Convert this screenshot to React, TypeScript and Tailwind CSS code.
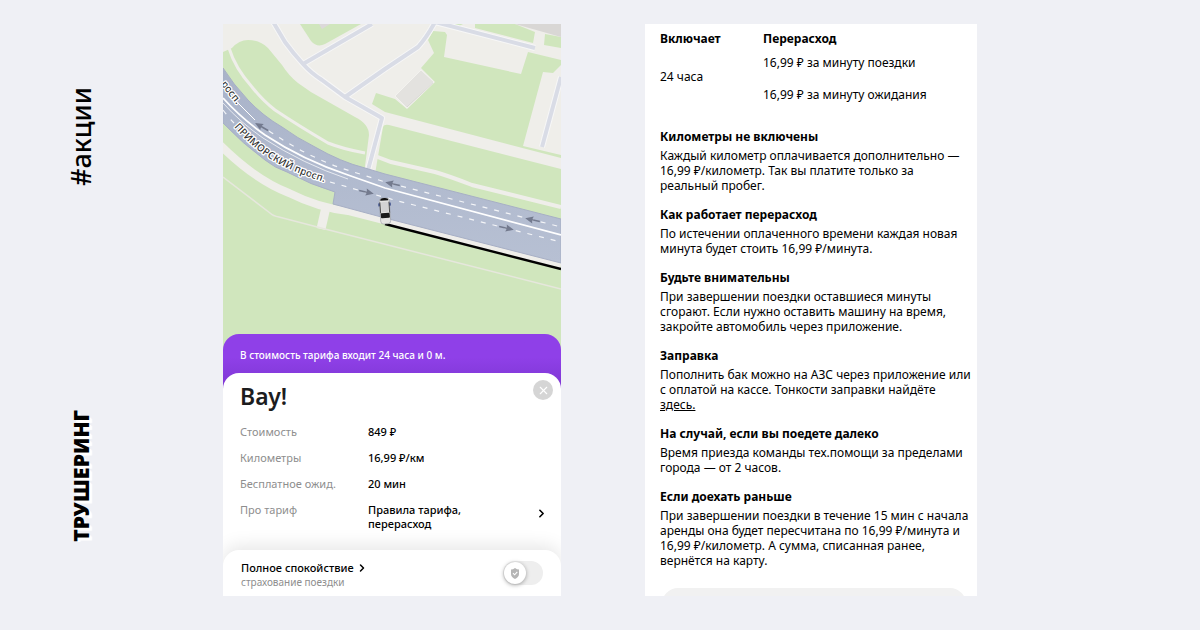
import { useState } from "react";
import { ChevronRight, X } from "lucide-react";

const tariffRows = [
  { label: "Стоимость", value: "849 ₽" },
  { label: "Километры", value: "16,99 ₽/км" },
  { label: "Бесплатное ожид.", value: "20 мин" },
];

const rules = [
  {
    title: "Километры не включены",
    text: "Каждый километр оплачивается дополнительно —\n16,99 ₽/километр. Так вы платите только за\nреальный пробег.",
  },
  {
    title: "Как работает перерасход",
    text: "По истечении оплаченного времени каждая новая\nминута будет стоить 16,99 ₽/минута.",
  },
  {
    title: "Будьте внимательны",
    text: "При завершении поездки оставшиеся минуты\nсгорают. Если нужно оставить машину на время,\nзакройте автомобиль через приложение.",
  },
  {
    title: "Заправка",
    text: "Пополнить бак можно на АЗС через приложение или\nс оплатой на кассе. Тонкости заправки найдёте\n",
    link: "здесь.",
  },
  {
    title: "На случай, если вы поедете далеко",
    text: "Время приезда команды тех.помощи за пределами\nгорода — от 2 часов.",
  },
  {
    title: "Если доехать раньше",
    text: "При завершении поездки в течение 15 мин с начала\nаренды она будет пересчитана по 16,99 ₽/минута и\n16,99 ₽/километр. А сумма, списанная ранее,\nвернётся на карту.",
  },
];

export default function App() {
  return (
    <main className="grid min-h-screen grid-cols-[223fr_338fr_84fr_332fr_223fr] bg-[#eff0f5] pt-6 pb-[34px] font-['Noto_Sans',sans-serif] text-black">
      <Sidebar />
      <TariffScreen />
      <RulesScreen />
    </main>
  );
}

function Sidebar() {
  return (
    <header className="flex flex-col items-start justify-between pt-[63px] pb-[54px] pl-[63px]">
      <p className="rotate-180 text-[27px] leading-9 font-medium [writing-mode:vertical-rl]">
        #акции
      </p>
      <h1 className="rotate-180 text-[21px] leading-9 font-black [text-shadow:-2px_2px_0_#fff,-3px_3px_1px_#fff] [writing-mode:vertical-rl]">
        ТРУШЕРИНГ
      </h1>
    </header>
  );
}

function TariffScreen() {
  return (
    <section className="flex flex-col overflow-hidden bg-white">
      <CityMap />
      <p className="relative -mt-4 rounded-t-2xl bg-gradient-to-b from-[#8f40e8] from-40% to-[#7c35d0] px-[17px] pt-3 pb-7 text-[10px] leading-[18px] font-medium text-white">
        В стоимость тарифа входит 24 часа и 0 м.
      </p>
      <div className="relative -mt-[19px] grow rounded-t-2xl bg-white px-[17px] pt-[7px] text-[11px] leading-[14px]">
        <div className="flex items-start justify-between">
          <h2 className="text-[23px] leading-8 font-semibold text-[#1c1c1e]">
            Вау!
          </h2>
          <button
            aria-label="Закрыть"
            className="-mr-[9px] flex size-5 items-center justify-center rounded-full bg-[#d5d5d5] text-white"
          >
            <X size={13} strokeWidth={2} />
          </button>
        </div>
        <dl className="mt-[13px] flex flex-col gap-3">
          {tariffRows.map(row => (
            <div key={row.label} className="flex">
              <dt className="w-32 text-[#8e8e8e]">{row.label}</dt>
              <dd className="font-medium">{row.value}</dd>
            </div>
          ))}
          <div className="flex">
            <dt className="w-32 text-[#8e8e8e]">Про тариф</dt>
            <dd className="flex grow items-start justify-between font-medium">
              <span>
                Правила тарифа,
                <br />
                перерасход
              </span>
              <ChevronRight size={13} strokeWidth={3} className="-mr-1 mt-1" />
            </dd>
          </div>
        </dl>
      </div>
      <InsuranceBar />
    </section>
  );
}

function InsuranceBar() {
  const [enabled, setEnabled] = useState(false);

  return (
    <div className="relative flex items-start justify-between rounded-t-2xl bg-white pt-[11px] pr-[18px] pb-[7px] pl-[18px] shadow-[0_-4px_18px_rgba(0,0,0,0.1)]">
      <div>
        <button className="flex items-center gap-0.5 text-[11px] leading-[14px] font-medium">
          Полное спокойствие
          <ChevronRight size={12} strokeWidth={3} />
        </button>
        <p className="text-[10px] leading-[14px] text-[#8e8e8e]">
          страхование поездки
        </p>
      </div>
      <label className="relative flex h-6 w-10 items-center rounded-full bg-[#eeeeee]">
        <input
          type="checkbox"
          aria-label="Полное спокойствие"
          checked={enabled}
          onChange={e => setEnabled(e.target.checked)}
          className="peer absolute size-full opacity-0"
        />
        <span className="ml-px flex size-[22px] items-center justify-center rounded-full bg-white shadow-[0_1px_4px_rgba(0,0,0,0.35)] peer-checked:ml-[17px]">
          <svg viewBox="0 0 10 11" className="h-[11px] w-[10px]">
            <path d="M1 1.5Q3 1.5 5 0Q7 1.5 9 1.5V6Q9 9 5 11Q1 9 1 6Z" fill="#b5b5b5" />
            <path d="M3 5.2L4.6 6.8L7.3 3.8" fill="none" stroke="#fff" strokeWidth="1.1" />
          </svg>
        </span>
      </label>
    </div>
  );
}

function RulesScreen() {
  return (
    <section className="col-start-4 flex flex-col justify-between overflow-hidden bg-white px-[15px] pt-[7px] text-[12px] leading-[15px]">
      <div>
        <table className="text-left">
          <thead>
            <tr>
              <th className="w-[103px] pb-[9px] font-bold">Включает</th>
              <th className="pb-[9px] font-bold">Перерасход</th>
            </tr>
          </thead>
          <tbody>
            <tr>
              <td rowSpan={2} className="pb-1">
                24 часа
              </td>
              <td>16,99 ₽ за минуту поездки</td>
            </tr>
            <tr>
              <td className="pt-[17px]">16,99 ₽ за минуту ожидания</td>
            </tr>
          </tbody>
        </table>
        <div className="mt-[27px] flex flex-col gap-3.5">
          {rules.map(rule => (
            <article key={rule.title}>
              <h3 className="mb-1 font-bold">{rule.title}</h3>
              <p className="whitespace-pre">
                {rule.text}
                {rule.link ? (
                  <a href="#fuel" className="underline">
                    {rule.link}
                  </a>
                ) : null}
              </p>
            </article>
          ))}
        </div>
      </div>
      <div className="-mr-1 -mb-3 ml-0.5 h-5 rounded-t-2xl bg-[#f1f1f1]" />
    </section>
  );
}

function CityMap() {
  return (
    <svg viewBox="0 0 338 326" className="block w-full shrink-0">
      <defs>
        <path id="street" d="M11 103Q30 125 54 139Q78 152 118 163" />
        <path id="street-end" d="M-14 42Q-3 61 16 83" />
        <linearGradient id="asphalt" x1="0" y1="0" x2="0" y2="1">
          <stop offset="0" stopColor="#a9b3c9" />
          <stop offset="1" stopColor="#b7c0d3" />
        </linearGradient>
      </defs>
      <rect width="338" height="326" fill="#efeeea" />

      {/* lawns */}
      <g fill="#d0e6bd">
        <path d="M0 28L9 24Q16 16 25 16Q37 16 45 24L59 41Q66 52 75 59Q88 69 102 76L132 93Q146 100 146 111L141 150L60 130L0 70Z" />
        <path d="M77 0L88 17Q94 24 102 20L138 0Z" />
        <path d="M149 80L153 69L172 75L184 85L212 58L198 44L211 29L205 16L210 7L222 8L224 11L221 33L298 50L305 28L338 36V41L330 49L320 48L300 122L338 131V134L162 88Z" />
        <path d="M152 150L160 103Q161 100 166 101L338 145V210Z" />
        <path d="M252 0H292L312 8L310 19L252 4Z" />
        <path d="M222 0H240L236 2Z" />
        <path d="M322 10L338 13V24L321 21Z" />
        <path d="M0 95L60 140L112 168L162 194L338 239V326H0Z" />
      </g>

      {/* buildings */}
      <path d="M292 0H338V13Z" fill="#d9d7d5" />
      <path d="M96 0L99 5L107 0Z" fill="#dcd9da" />
      <path d="M172 72L198 46L211 58L184 84Z" fill="#e3e2df" stroke="#f3f2ef" />
      <path d="M210 59L184 83" stroke="#d0cfcc" strokeWidth="0.6" />

      {/* footpaths */}
      <g fill="none" stroke="#efeeea">
        <path d="M6 24Q12 44 29 63Q40 77 52 86Q76 102 105 119Q120 125 142 129" strokeWidth="3" />
        <path d="M152 132L168 138L212 148Q226 152 249 161L338 183" strokeWidth="4" />
        <path d="M-4 120Q32 156 66 169Q96 184 125 187L160 196L338 241" strokeWidth="8" />
        <path d="M103 183L98 205" strokeWidth="9" />
        <path d="M0 153L47 189Q50 192 56 193L102 205L338 265" stroke="#e6e7dd" strokeWidth="1.5" />
      </g>

      {/* side streets */}
      <g fill="none" stroke="#f7f7f7" strokeWidth="6" strokeLinejoin="round">
        <path d="M49 -4L62 18Q70 29 80 40Q88 49 99 56L122 73L159 94L145 146" />
        <path d="M80 40L149 0" />
        <path d="M122 73L162 45L195 23Q204 13 212 -2" />
        <path d="M212 -2L312 24" />
        <path d="M338 53L319 123" />
      </g>
      <g fill="none" stroke="#d9dce6" strokeWidth="4" strokeLinejoin="round">
        <path d="M49 -4L62 18Q70 29 80 40Q88 49 99 56L122 73L159 94L145 146" />
        <path d="M80 40L149 0" />
        <path d="M122 73L162 45L195 23Q204 13 212 -2" />
        <path d="M212 -2L312 24" />
        <path d="M338 53L319 123" />
      </g>

      {/* the avenue */}
      <path
        d="M0 44Q10 60 25 76Q40 92 59 103Q74 114 92 123Q118 138 142 144L162 150L338 195V239L162 194L110 180L112 168Q88 161 64 148Q52 144 42 136Q20 120 0 99Z"
        fill="url(#asphalt)"
        stroke="#a7afc5"
        strokeWidth="1"
      />
      <g fill="none" stroke="#fff">
        <path d="M0 74Q18 94 42 111Q80 136 125 151L162 164L338 211" strokeWidth="1.8" />
        <path d="M0 79Q18 99 40 114Q80 140 125 155" strokeWidth="0.7" />
        <path d="M12 76L32 96" strokeWidth="1" />
        <path d="M46 107Q80 130 115 143L162 158L338 203" strokeOpacity="0.85" strokeWidth="1.2" strokeDasharray="5 7" />
        <path d="M0 86Q12 102 24 110M107 158L135 166L175 177L338 218" strokeOpacity="0.85" strokeWidth="1.2" strokeDasharray="5 7" />
      </g>
      <LaneArrow x={39} y={103} angle={210} />
      <LaneArrow x={170} y={160} angle={193} />
      <LaneArrow x={310} y={196} angle={193} />
      <LaneArrow x={143} y={168} angle={13} />
      <LaneArrow x={283} y={204} angle={13} />

      <g
        fontSize="10"
        fontWeight="500"
        fill="#333"
        stroke="#fff"
        strokeWidth="2.5"
        strokeLinejoin="round"
        paintOrder="stroke"
      >
        <text>
          <textPath href="#street">ПРИМОРСКИЙ просп.</textPath>
        </text>
        <text textAnchor="end">
          <textPath href="#street-end" startOffset="94%">
            росп.
          </textPath>
        </text>
      </g>

      {/* route and car */}
      <path d="M162 200L338 245" stroke="#000" strokeWidth="2.4" />
      <g transform="translate(162 187) rotate(-4)">
        <rect x="-5" y="-13" width="10" height="26" rx="3" fill="#e4e4e2" stroke="#8d9097" strokeWidth="0.5" />
        <path d="M-4 -11Q-4 -13 0 -13Q4 -13 4 -11L4 -10.5H-4Z" fill="#111" />
        <rect x="-3.5" y="-9" width="7" height="10" rx="1" fill="#d3d3d3" />
        <rect x="-4.5" y="2" width="9" height="5" rx="1" fill="#1a1a1a" />
        <path d="M-5.5 -8V-5M5.5 -8V-5" stroke="#3f518c" strokeWidth="1.5" />
        <path d="M-4.5 -9V2M4.5 -9V2" stroke="#333" strokeWidth="0.8" />
      </g>
    </svg>
  );
}

function LaneArrow({ x, y, angle }: { x: number; y: number; angle: number }) {
  return (
    <g transform={`translate(${x} ${y}) rotate(${angle})`}>
      <path d="M-7 0H2" stroke="#737a8e" strokeWidth="1.5" />
      <path d="M8 0L0 -3.5L1 0L0 3.5Z" fill="#737a8e" />
    </g>
  );
}
